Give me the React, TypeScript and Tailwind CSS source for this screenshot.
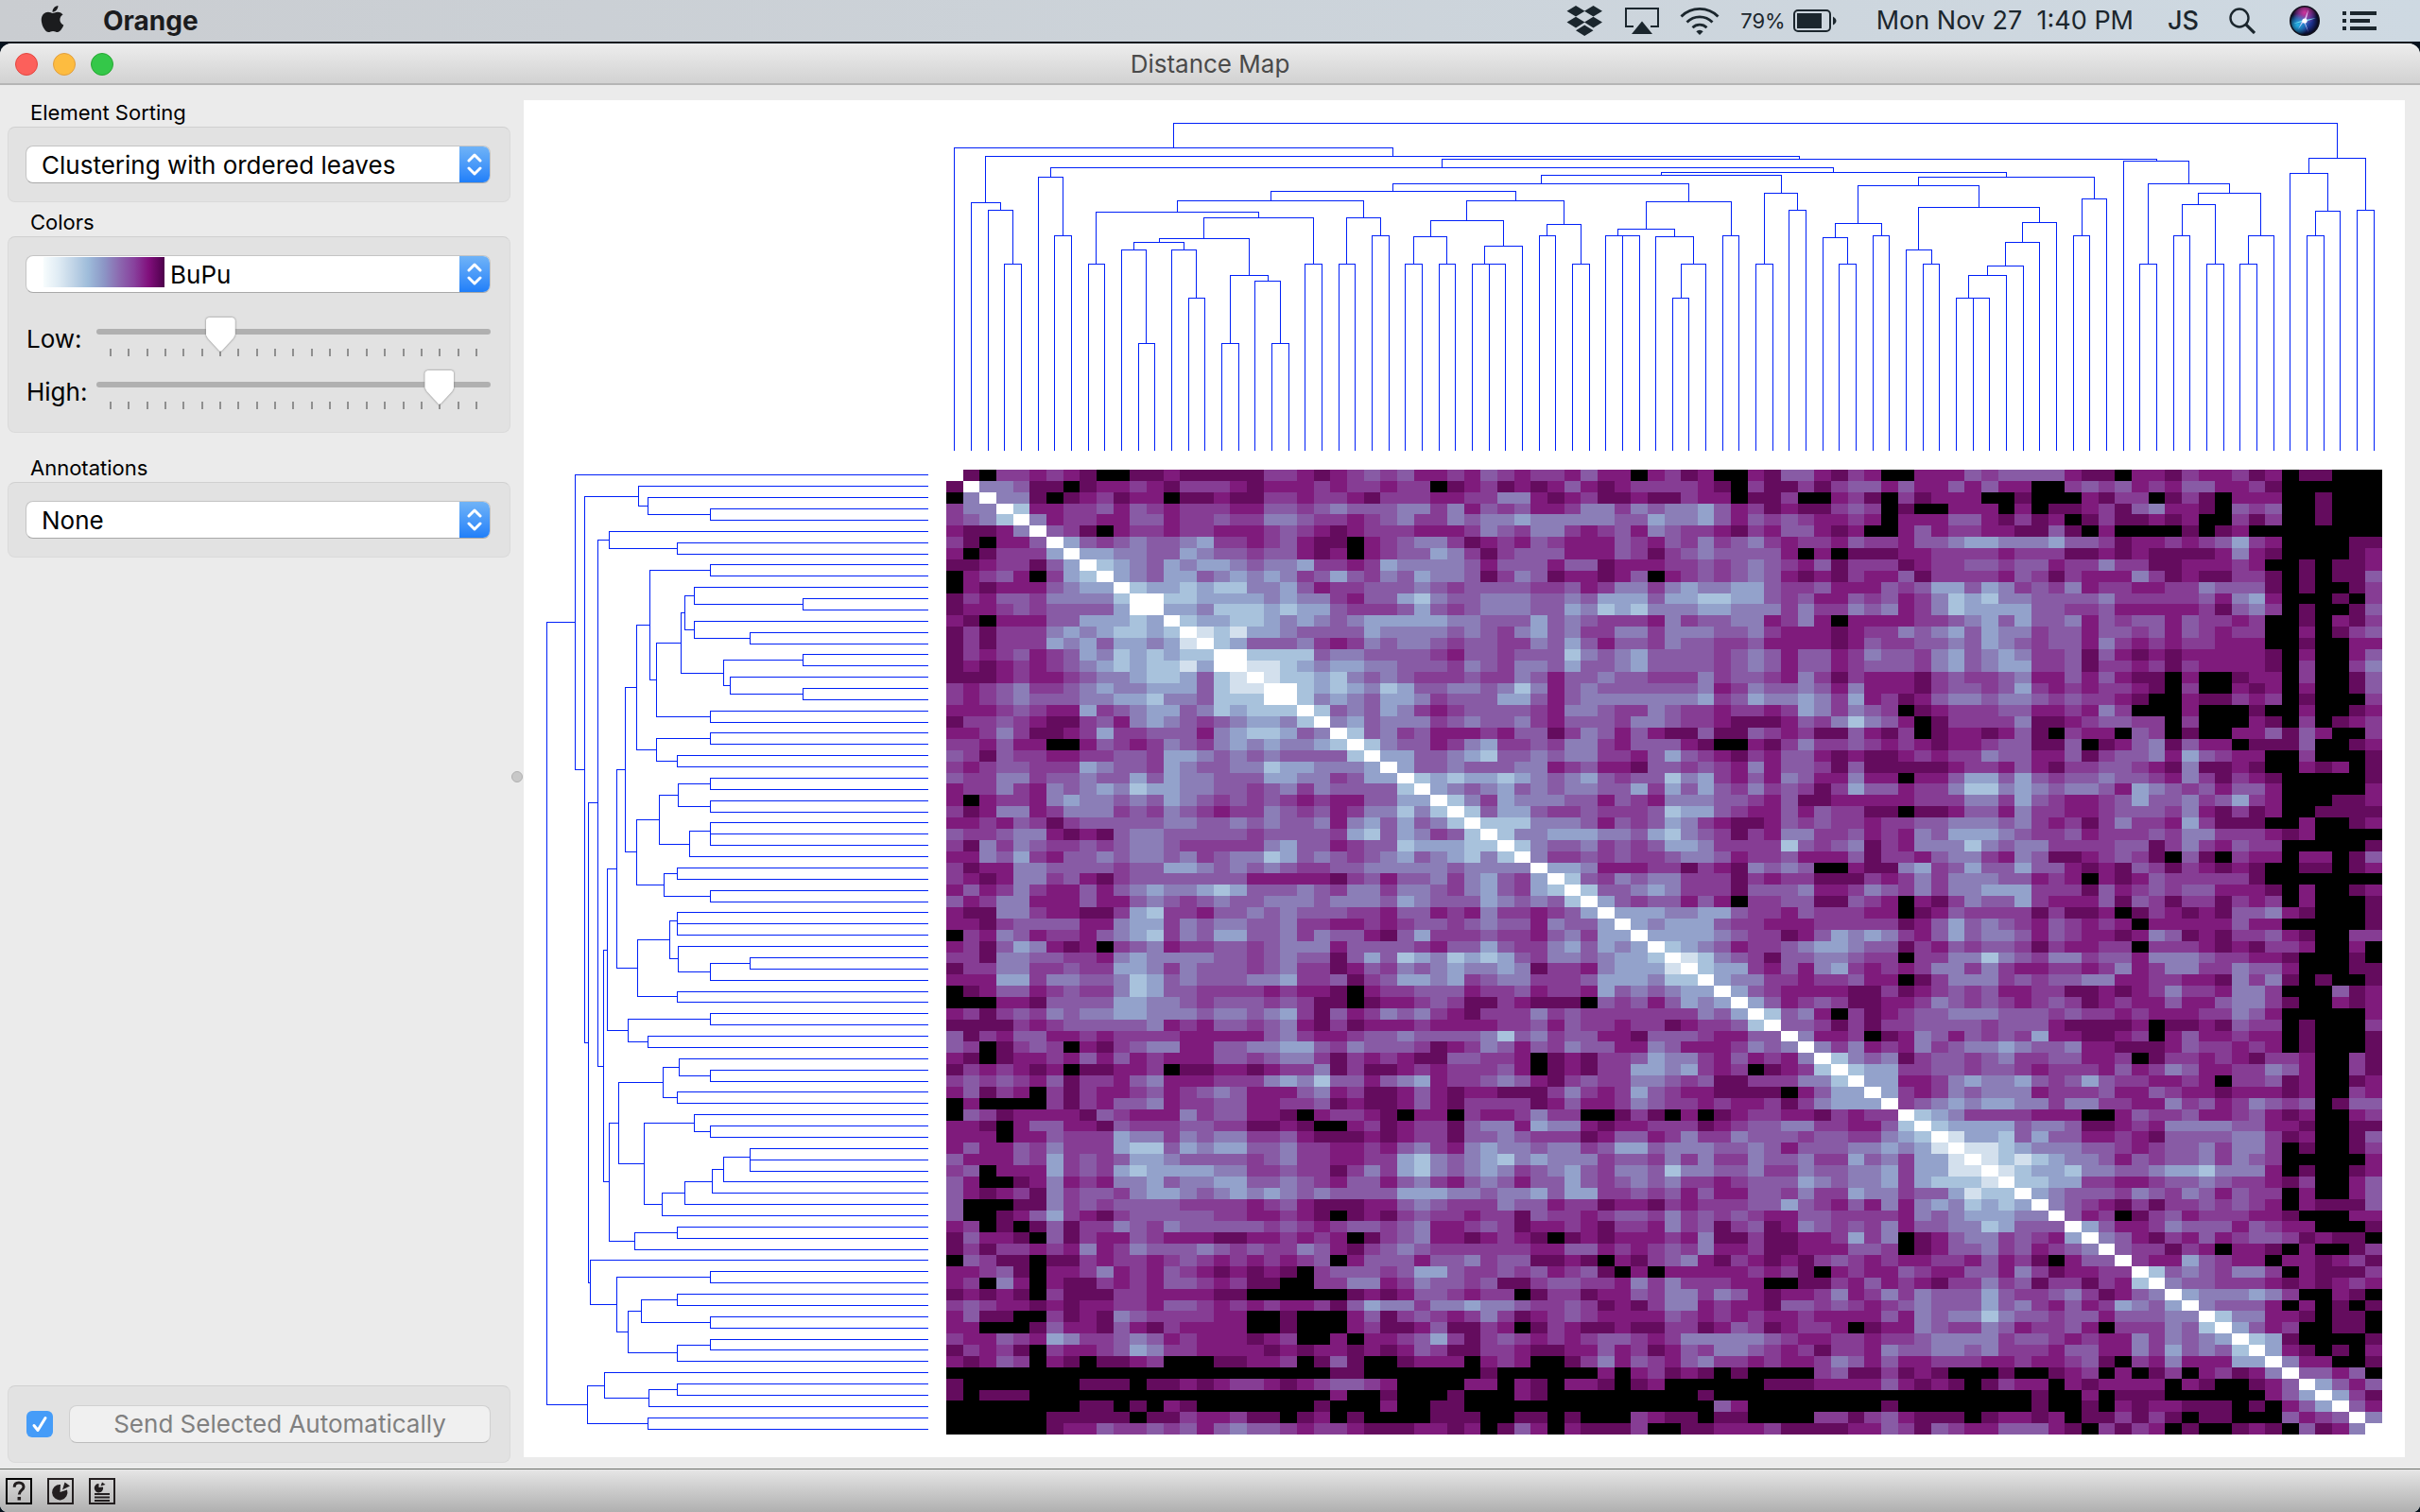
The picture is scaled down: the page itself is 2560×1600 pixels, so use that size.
import type { ReactNode } from 'react';
import { FaApple } from 'react-icons/fa';

/* ---------- Distance matrix ---------- */

// Colour levels from nearest (w) to farthest (k).
const LEVELS: Record<string, string> = {
  w: '#ffffff',
  a: '#d3e0ed',
  b: '#a8c2dc',
  c: '#93a2cb',
  d: '#8b7eb7',
  e: '#885ba5',
  f: '#863d94',
  g: '#7f1b7c',
  h: '#640c5e',
  k: '#000000',
};

// Upper triangle of the symmetric matrix: row i lists columns i and up.
const TRIANGLE = [
  'whkffgfghkkhhghhhhhffghgfefeggfgefgffgeggkg' + 'fhgkkgheeghfgkkgggefeeeeghhkgghfggfhgkhhkkk',
  'wddehhkhggfghfffghgggfgffgffkhgfhghgeghgff' + 'ffghkfhhfhfeegeggegeggkkfefegfgeeggfhkkkkkk',
  'wddhkhgfhggkhhghhffgffghfffggffddghgfhhgh' + 'hfggkhhfkkgfhkfhgggkkhkkkghffkhfhkgggkkhkkk',
  'wbggffegefgfffggeefedeeeddfdgefeggfddfde' + 'ddcegfhghhfefkhkkgggkgkhhgfhedgghkefekkhkkk',
  'wdgffggeegffeffddeffgfedffdeddcdddddeec' + 'ddcegefefggfgkgggeeghfhgkhfhhghgkkfhfkkhkkk',
  'wefhkgffgffgggfefghgfffgggfdefddfgfegd' + 'effghfgeeghgkkgegffgghhehkgkkkkhkhgkkkkkkkk',
  'wcefedeedcffgfeghhkgfeddfhgfgefgggefg' + 'efdfedfgffgeffgeedccdddceefhggfgfecfgkkkkhh',
  'wccddeecdeefeeghgkgfeecdfhfeeegggefh' + 'fedeeeegkgkhhhggffffgfffhhghghhhhgdghkkkkhg',
  'wbcdecdccdeddcffgfcddddegeeegeehggg' + 'ffefedefgehfffhgffeefeegffdffhhgggfgkkhkhhg',
  'wcdeccedcdcdfecefdecddehfdehgghgek' + 'gfefedeghghfggehffffgefhfgggdfhghhffhkhkhhe',
  'wbccbcbbddcegffeeedefeeeeffegfddf' + 'dcddcceffegggefeccecdfefdgffggffdeeehkhkkhf',
  'wwbbccccdcddfgeecbdeedddeedeccce' + 'ccbbccefeggefegfdbcbddeeeedfffffegdcgkkkhkf',
  'wccdbbbcbccefffecefedddeecdbcbd' + 'ddccdddfdffdedgfdbcccceeffegggggfhedfkhkkhe',
  'wbccbbcdcdedcccccddeeecedefffg' + 'dfeeddgfdgkggggffedceceedgefeegeffgfkkhkghf',
  'wabaccdeeeecddddedefdcedffddf' + 'dddeedfggghgffdedcecddfeegeefegefgffkkgkhfe',
  'wbceeedfgfdeddefeeffdecegeef' + 'deeffegggghgeffeedecdefeegdfgfgffgggkkhkkgg',
  'wwbbbbeddeeeefgeefeeebdedce' + 'eeefedegeegfdeefdcedcdffeheghghggggghkgkkge',
  'waabcdccddeeefdefddeceedce' + 'eeefedegeegfeeefdcedccffehffgfhfgggghkfkkfd',
  'wabbcbdedefffeffdegeedeef' + 'ffdfeefgdfhfggghfeffedggegeghhkgkkhggkfkkhe',
  'wwbcbcdbceeddedbdgedeeee' + 'eedgfdeedegdggghfeefecfgfgffghkfkkghgkgkkhe',
  'wbdcdeccdfeeeccegeddddd' + 'ddcfecddcdfcgfhgeddeddefeffghkkghhfgfkhkkkf',
  'wbedecdfgfeeeefgddeffd' + 'effgffgfcdfdefkhgfffeeggfgdfkkkgkkkhkkgkkhg',
  'wdcedddfedeedfgeeefdd' + 'effghhhgefdbdegkhffffdhhgfeeffkfkkkghkfkhgf',
  'wbedfegggfgeehfdegeg' + 'hhehhefgfhheghfkhgghgehkfggkefkhkkggehegkkf',
  'wbdeegfdcffefddfgee' + 'eghkkghfdffefgfghggfeehhekhgedheggkhhhekkhg',
  'wcceedcbeededdffge' + 'cefghfgeeghghhgfgffdeeggehfeedgcefggkkfkkkh',
  'wceedeeeddgfegghe' + 'efefgdgeefhehhhhhgffgeghffeefghdhhghkkghgkh',
  'wbcbccbcdedcefee' + 'bdcfgegdeggdggkggeccecefeedeefgdfhfghkkkkkh',
  'wcdedcededdeecf' + 'cecefdfefhfceegffdbbdcdeddegcdefegeegkkkkkg',
  'wbdfcdddeegefg' + 'dddeefgehhgggggfffddfcefggfeceedfecfgkkkhhg',
  'wbecceffefffe' + 'bccefggegeffhhkhhgeegdffggfeeefdghfhgkkhhhh',
  'wbbbdddegefe' + 'cdfghhgefeffgffeedddedfgfhfdffgcfhhhkkgkkhg',
  'wbddcccddec' + 'bdefhfgddffegfgdecccdeffegfffefddfffghgkkkk',
  'wbdeedfefe' + 'ccdffffbefedhfgdddbdeddffffeehfdfgeffkkkkkh',
  'wdffefeff' + 'eddegffegggehffgeddfgdehhgfefhkehkfggkggkhe',
  'wccdgggf' + 'fhfghdedekkghhdcfeceeceeghghefhfghghkkhhkhg',
  'wbefded' + 'dfffhfgffhhhfgfdfdddeegfgkghgefffffhkkkkkkk',
  'wbeedc' + 'dfffheeedggfdefdfddcccfffhegfefeeggghkgkkhg',
  'wcefe' + 'egegkffeehhefgkghfdeecfgggehefhffhfgfkgkkkh',
  'wccc' + 'ddcceffgefffggkhgeffffhfhhgkhfghgheedghkkkh',
  'wcd' + 'ccceffgggfffffhgecedefgefgfgkgggggeggkkkkkh',
  'wc' + 'cccdeffhgecdcdfgeceddegefgghgdehghffeghkkff',
  'w' + 'bcdegffedccdeehfgefeefhfggffkfffghghffgkkgk',
  'wabdefheeddeffkffddbdefddfeegdddeffgghkkkhk',
  'wbccfgegdcfgfgfddfdfggffgfdgfddffdeegkkkhh',
  'wcddffgffeggkhfdddfefeeddggffgghdfdhkhkkh',
  'wcefgggghhfhgfefeggffhhghgfdffgddfkkkehg',
  'wcegfefhhggfdefefgfefhgfggeggeddfhkkghg',
  'wbedgkfhgfeedddeeefeffgfgggffdegkkkkkg',
  'weefhfhffeeeefeeeghhhhgkhhgheffkhkkkf',
  'wdggfkhgdegefefcgghhgfkgeggfggkhkkkh',
  'wdfdgfgdfeddcdeedgghhhgeffgfgkhkkkh',
  'wbdedhfeefedffeeggfkhffgfghffgkkfh',
  'wbccffeefeefgfffgegfdeggffdegkkfh',
  'wccggfdcddcefeceffggfgkffehgkkhg',
  'wcfgfdedddgfffeggefgghggghgkkfg',
  'wfedcdccddfddffggdfegfdefekhee',
  'wbcdffffgggkkgeffeggfeghgkkgf',
  'wbcccceddehhgfgddddeegghkkhh',
  'waccbeceeggfgheeeeddfhgkkhe',
  'waabcdddeefgfeedfddfkhkkhf',
  'wababcddegefeedfdefkkkkkg',
  'wabccbddeedccbdddgkhkkhg',
  'wbbccffggfeedeffghfkkge',
  'wcdeeefdefdegeffkgkkge',
  'wdefghfhffefefgkghhhe',
  'wegfkhfegfffgghkkkgg',
  'wceggfdeeegefggkkkh',
  'wdeghfgegfeefhghhk',
  'weffhfgkgghkgkkhf',
  'wfggcefggkgghgfh',
  'wbedefddfkghhhf',
  'wdeefffghghgfg',
  'wcdddcdfkkghk',
  'wdeeegkgkhkh',
  'wbddgghkhhk',
  'wcegfkkhhk',
  'wbchkkkkh',
  'wcghkhkg',
  'wdggkkh',
  'weegek',
  'wcege',
  'wcfh',
  'weg',
  'wd',
  'w',
];

const SIZE = TRIANGLE.length;

function levelAt(row: number, col: number) {
  const i = Math.min(row, col);
  return TRIANGLE[i][Math.max(row, col) - i];
}

type Run = { row: number; col: number; span: number; level: string };

const RUNS: Run[] = [];
for (let row = 0; row < SIZE; row++) {
  let col = 0;
  while (col < SIZE) {
    const level = levelAt(row, col);
    let end = col + 1;
    while (end < SIZE && levelAt(row, end) === level) end++;
    RUNS.push({ row, col, span: end - col, level });
    col = end;
  }
}

function Heatmap() {
  return (
    <svg
      role="img"
      aria-label="Distance matrix"
      className="block h-full w-full"
      viewBox={`0 0 ${SIZE} ${SIZE}`}
      preserveAspectRatio="none"
      shapeRendering="crispEdges"
    >
      {RUNS.map((r) => (
        <rect key={`${r.row}-${r.col}`} x={r.col} y={r.row} width={r.span} height={1} fill={LEVELS[r.level]} />
      ))}
    </svg>
  );
}

/* ---------- Dendrogram ---------- */

type Tree = null | { depth: number; left: Tree; right: Tree };

const o: Tree = null;
const n = (depth: number, left: Tree, right: Tree): Tree => ({ depth, left, right });
const LEAF_DEPTH = 347;

const earlyClusters = n(
  72,
  n(
    82,
    n(
      94,
      n(149, o, o),
      n(
        100,
        n(
          122,
          n(126, n(134, o, n(233, o, o)), n(134, o, n(185, o, o))),
          n(161, n(233, o, o), n(167, o, n(233, o, o))),
        ),
        n(149, o, o),
      ),
    ),
    n(100, n(149, o, o), n(119, o, o)),
  ),
  n(
    82,
    n(103, n(120, n(149, o, o), n(149, o, o)), n(130, n(149, o, n(149, o, o)), o)),
    n(107, n(119, o, o), n(149, o, o)),
  ),
);

const middleClusters = n(
  83,
  n(112, n(119, o, n(119, o, o)), n(120, o, n(149, n(185, o, o), o))),
  n(119, o, o),
);

const lateClusters = n(
  57,
  n(
    66,
    n(106, n(121, o, n(149, o, o)), n(119, o, o)),
    n(
      89,
      n(134, o, n(149, o, o)),
      n(105, n(126, n(151, n(161, n(185, o, n(185, o, o)), o), o), o), o),
    ),
  ),
  n(80, n(119, o, o), o),
);

const TREE = n(
  0,
  n(
    26,
    o,
    n(
      35,
      n(84, o, n(92, o, n(149, o, o))),
      n(
        38,
        n(
          47,
          n(57, o, n(119, o, o)),
          n(52, n(55, n(64, earlyClusters, middleClusters), n(74, n(149, o, o), n(92, o, o))), lateClusters),
        ),
        n(
          40,
          o,
          n(64, n(149, o, o), n(74, n(86, n(119, o, o), n(149, o, o)), n(119, n(149, o, o), o))),
        ),
      ),
    ),
  ),
  n(37, n(53, o, n(93, n(119, o, o), o)), n(92, o, o)),
);

// Each bracket joins two children: [first position, its depth, second position, its depth, own depth].
type Bracket = [number, number, number, number, number];

function layoutTree(root: Tree): Bracket[] {
  const brackets: Bracket[] = [];
  let leaf = 0;
  const place = (t: Tree): [number, number] => {
    if (t === null) return [leaf++ + 0.5, LEAF_DEPTH];
    const [a, da] = place(t.left);
    const [b, db] = place(t.right);
    brackets.push([a, da, b, db, t.depth]);
    return [(a + b) / 2, t.depth];
  };
  place(root);
  return brackets;
}

const BRACKETS = layoutTree(TREE);
const TOP_PATH = BRACKETS.map(([a, da, b, db, d]) => `M${a} ${da}V${d}H${b}V${db}`).join('');
const SIDE_PATH = BRACKETS.map(([a, da, b, db, d]) => `M${da} ${a}H${d}V${b}H${db}`).join('');

function Dendrogram({ side }: { side: 'top' | 'left' }) {
  return (
    <svg
      role="img"
      aria-label={side === 'top' ? 'Column clusters' : 'Row clusters'}
      className="block h-full w-full overflow-visible"
      viewBox={side === 'top' ? `0 0 ${SIZE} ${LEAF_DEPTH}` : `0 0 ${LEAF_DEPTH} ${SIZE}`}
      preserveAspectRatio="none"
      shapeRendering="crispEdges"
    >
      <path
        d={side === 'top' ? TOP_PATH : SIDE_PATH}
        fill="none"
        stroke="#0020f8"
        strokeWidth={1}
        vectorEffect="non-scaling-stroke"
      />
    </svg>
  );
}

/* ---------- Menu bar ---------- */

function DropboxIcon() {
  return (
    <svg className="h-8 w-[38px]" viewBox="0 0 38 32" fill="currentColor" aria-hidden="true">
      <path d="M10 0 19.500 5.800 10 11.600 0.500 5.800ZM28.500 0 38 5.800 28.500 11.600 19 5.800ZM10 11.800 19.500 17.600 10 23.400 0.500 17.600ZM28.500 11.800 38 17.600 28.500 23.400 19 17.600ZM19.200 20.600 28.500 26.300 19.200 32 10 26.300Z" />
    </svg>
  );
}

function AirPlayIcon() {
  return (
    <svg className="h-7 w-9" viewBox="0 0 36 28" aria-hidden="true">
      <path d="M9 20H1V1H35V20H27" fill="none" stroke="currentColor" strokeWidth="2" />
      <path d="M18 14.500 29 28H7Z" fill="currentColor" />
    </svg>
  );
}

function WifiIcon() {
  return (
    <svg className="h-[30px] w-[42px]" viewBox="0 0 42 30" fill="none" stroke="currentColor" strokeWidth="2.800" aria-hidden="true">
      <path d="M1.500 10.500A27.500 27.500 0 0 1 40.500 10.500" />
      <path d="M7.500 16.500A19 19 0 0 1 34.500 16.500" />
      <path d="M13.500 22.200A10.800 10.800 0 0 1 28.500 22.200" />
      <path d="M21 30 17.300 26.200A5.300 5.300 0 0 1 24.700 26.200Z" fill="currentColor" stroke="none" />
    </svg>
  );
}

function BatteryIcon() {
  return (
    <svg className="h-6 w-[46px]" viewBox="0 0 46 24" aria-hidden="true">
      <rect x="1" y="1" width="38" height="22" rx="4" fill="none" stroke="currentColor" strokeWidth="2" />
      <rect x="4" y="4" width="26" height="16" fill="currentColor" />
      <path d="M42 7.500C44.500 9 45.500 10.500 45.500 12C45.500 13.500 44.500 15 42 16.500Z" fill="currentColor" />
    </svg>
  );
}

function SearchIcon() {
  return (
    <svg className="h-7 w-7" viewBox="0 0 28 28" fill="none" stroke="currentColor" strokeWidth="2.400" aria-hidden="true">
      <circle cx="11" cy="11" r="9.500" />
      <path d="M17.800 17.800 27 27" strokeWidth="3.200" />
    </svg>
  );
}

function SiriIcon() {
  return (
    <svg className="h-8 w-8" viewBox="0 0 32 32" aria-hidden="true">
      <defs>
        <radialGradient id="siri-base" cx="50%" cy="50%" r="50%">
          <stop offset="0%" stopColor="#2f6fd8" />
          <stop offset="60%" stopColor="#1a2a80" />
          <stop offset="100%" stopColor="#080a20" />
        </radialGradient>
        <radialGradient id="siri-pink" cx="50%" cy="20%" r="45%">
          <stop offset="0%" stopColor="#d0349a" />
          <stop offset="100%" stopColor="#d0349a" stopOpacity="0" />
        </radialGradient>
        <radialGradient id="siri-cyan" cx="25%" cy="65%" r="40%">
          <stop offset="0%" stopColor="#22b4e6" />
          <stop offset="100%" stopColor="#22b4e6" stopOpacity="0" />
        </radialGradient>
      </defs>
      <circle cx="16" cy="16" r="16" fill="#10101c" />
      <circle cx="16" cy="16" r="14.500" fill="url(#siri-base)" />
      <circle cx="16" cy="16" r="14.500" fill="url(#siri-pink)" />
      <circle cx="16" cy="16" r="14.500" fill="url(#siri-cyan)" />
      <path d="M16 15 28 13 17 17ZM15 17 4 19 15 15Z" fill="#7fe9f5" opacity="0.850" />
      <path d="M15 16 20 4 17.500 16ZM16 16 20 28 15 17ZM15 17 9 25 14 15Z" fill="#e9d6ff" opacity="0.850" />
      <circle cx="16" cy="16" r="2.600" fill="#fff" />
    </svg>
  );
}

function ListIcon() {
  return (
    <svg className="h-5 w-9" viewBox="0 0 36 20" fill="currentColor" aria-hidden="true">
      <path d="M0 0H4V4H0ZM0 8H4V12H0ZM0 16H4V20H0ZM8 0H36V4H8ZM8 8H29V12H8ZM8 16H36V20H8Z" />
    </svg>
  );
}

function MenuBar() {
  return (
    <header className="flex h-11 shrink-0 items-center bg-linear-to-r from-[#cacdd1] to-[#ced9e2] pr-[46px] pl-[42px] text-[#1b262d]">
      <button type="button" aria-label="Apple menu" className="-mt-1 mr-10 text-[#1b1c1e]">
        <FaApple className="h-8 w-[27px]" />
      </button>
      <button type="button" className="text-[28px] leading-8 font-bold text-[#1b1c1e]">
        Orange
      </button>
      <div className="ml-auto flex items-center">
        <button type="button" aria-label="Dropbox" className="mr-6">
          <DropboxIcon />
        </button>
        <button type="button" aria-label="AirPlay" className="mr-[22px]">
          <AirPlayIcon />
        </button>
        <button type="button" aria-label="Wi-Fi" className="mr-[22px]">
          <WifiIcon />
        </button>
        <button type="button" aria-label="Battery 79%" className="mr-[42px] flex items-center gap-2">
          <span className="text-[22px] leading-8">79%</span>
          <BatteryIcon />
        </button>
        <button type="button" className="mr-9 text-[27px] leading-8 whitespace-pre">
          {'Mon Nov 27  1:40 PM'}
        </button>
        <button type="button" className="mr-8 text-[27px] leading-8 font-medium">
          JS
        </button>
        <button type="button" aria-label="Search" className="mr-9">
          <SearchIcon />
        </button>
        <button type="button" aria-label="Siri" className="mr-6">
          <SiriIcon />
        </button>
        <button type="button" aria-label="Notification Center">
          <ListIcon />
        </button>
      </div>
    </header>
  );
}

/* ---------- Window chrome ---------- */

function TitleBar() {
  return (
    <div className="flex h-11 shrink-0 items-center border-b-2 border-[#b5b5b5] bg-linear-to-b from-[#ededed] to-[#d2d2d2] px-4 pt-0.5">
      <div className="flex flex-1 gap-4">
        <button type="button" aria-label="Close" className="size-6 rounded-full border border-[#e2463f] bg-[#fc605b]" />
        <button type="button" aria-label="Minimize" className="size-6 rounded-full border border-[#e09e3e] bg-[#fdbc40]" />
        <button type="button" aria-label="Zoom" className="size-6 rounded-full border border-[#27a833] bg-[#34c749]" />
      </div>
      <h1 className="text-[26px] leading-8 text-[#4a4a4a]">Distance Map</h1>
      <div className="flex-1" />
    </div>
  );
}

function StatusBar() {
  return (
    <footer className="flex h-[46px] shrink-0 items-center gap-4 border-t border-[#6e726c] bg-linear-to-b from-[#e6e6e6] to-[#b0b0b0] px-1.5">
      <button
        type="button"
        aria-label="Help"
        className="grid size-7 place-items-center border-2 border-black text-[#231f20]"
      >
        <svg className="size-6" viewBox="0 0 24 24" fill="none" stroke="currentColor" strokeWidth="3" aria-hidden="true">
          <path d="M7.200 7.800C7.200 4.500 9.200 3 12 3C15 3 17 4.800 17 7.500C17 11 12.300 11 12.300 15.500" />
          <path d="M12.300 18V21.500" strokeWidth="3.500" />
        </svg>
      </button>
      <button
        type="button"
        aria-label="Save image"
        className="grid size-7 place-items-center border-2 border-[#231f20] text-[#231f20]"
      >
        <svg className="size-6" viewBox="0 0 24 24" fill="currentColor" aria-hidden="true">
          <path d="M11.500 13 12 5A8.200 8.200 0 1 0 19 10.500Z" />
          <path d="M14 10.500 16.500 2.500 22 6.500Z" />
        </svg>
      </button>
      <button
        type="button"
        aria-label="Report"
        className="grid size-7 place-items-center border-2 border-[#231f20] text-[#231f20]"
      >
        <svg className="size-6" viewBox="0 0 24 24" fill="currentColor" aria-hidden="true">
          <path d="M8.500 8 8.500 4A4.700 4.700 0 1 0 13 7.500Z" />
          <path d="M10.500 6.500 12 2.500 15.500 5Z" />
          <path d="M4 14H20V16H4ZM4 17.500H20V19.500H4ZM4 21H20V23H4Z" />
        </svg>
      </button>
    </footer>
  );
}

/* ---------- Sidebar ---------- */

function GroupBox({ title, children, className = '' }: { title: string; children: ReactNode; className?: string }) {
  return (
    <section className={className}>
      <h2 className="pb-0.5 pl-6 text-[22px] leading-[26px] text-black">{title}</h2>
      <div className="rounded-lg border border-[#dadada] border-t-[#d0d0d0] bg-[#e2e2e2] py-[19px] pr-5 pl-[18px]">
        {children}
      </div>
    </section>
  );
}

function PopUp({ label, value, swatch = false }: { label: string; value: string; swatch?: boolean }) {
  return (
    <div className="relative flex h-10 overflow-hidden rounded-lg border border-[#c4c4c4] border-b-[#a8a8a8] bg-white">
      <select
        aria-label={label}
        defaultValue={value}
        className={
          swatch
            ? 'h-full w-full appearance-none bg-transparent pl-[152px] text-[26px] text-black outline-none'
            : 'h-full w-full appearance-none bg-transparent pl-4 text-[26px] text-black outline-none'
        }
      >
        <option>{value}</option>
      </select>
      {swatch && (
        <span className="pointer-events-none absolute top-px left-[18px] h-8 w-32 bg-[linear-gradient(to_right,#f7fcfd,#e0ecf4_12%,#bfd3e6_25%,#9ebcda_37%,#8c96c6_50%,#8c6bb1_62%,#88419d_75%,#810f7c_87%,#4d004b)]" />
      )}
      <span className="pointer-events-none absolute inset-y-0 right-0 grid w-8 place-items-center bg-linear-to-b from-[#6fb3f7] to-[#1f7ff9]">
        <svg className="h-[26px] w-4" viewBox="0 0 16 26" fill="none" stroke="#fff" strokeWidth="3" strokeLinecap="round" strokeLinejoin="round" aria-hidden="true">
          <path d="M2 9 8 3 14 9M2 17 8 23 14 17" />
        </svg>
      </span>
    </div>
  );
}

const TICKS = Array.from({ length: 21 }, (_, i) => i);

function LevelSlider({ id, label, value }: { id: string; label: string; value: number }) {
  return (
    <div className="flex h-14 items-start">
      <label htmlFor={id} className="w-[75px] pt-[7px] pl-px text-[26px] leading-8 text-black">
        {label}
      </label>
      <div className="relative h-[42px] flex-1">
        <div className="absolute inset-x-0 top-3 h-1.5 rounded-full bg-[#b0b0b0]" />
        <div className="absolute inset-x-[14px] top-[33px] flex justify-between">
          {TICKS.map((t) => (
            <span key={t} className="h-2 w-0.5 bg-[#8f8f8f]" />
          ))}
        </div>
        <input
          id={id}
          type="range"
          min={0}
          max={20}
          defaultValue={value}
          className="relative block h-9 w-full appearance-none bg-transparent drop-shadow-[0_0_1px_#777] outline-none [&::-webkit-slider-thumb]:h-9 [&::-webkit-slider-thumb]:w-[31px] [&::-webkit-slider-thumb]:appearance-none [&::-webkit-slider-thumb]:bg-white [&::-webkit-slider-thumb]:[clip-path:polygon(0_3px,1px_1px,3px_0,28px_0,30px_1px,31px_3px,31px_18px,29px_22px,17px_35px,15px_36px,14px_35px,2px_22px,0_18px)]"
        />
      </div>
    </div>
  );
}

function Sidebar() {
  return (
    <aside className="flex w-[540px] shrink-0 flex-col pt-4 pb-1.5 pl-2">
      <GroupBox title="Element Sorting">
        <PopUp label="Element Sorting" value="Clustering with ordered leaves" />
      </GroupBox>
      <GroupBox title="Colors" className="mt-2">
        <PopUp label="Color palette" value="BuPu" swatch />
        <div className="mt-[26px] -mb-2.5">
          <LevelSlider id="low" label="Low:" value={6} />
          <LevelSlider id="high" label="High:" value={18} />
        </div>
      </GroupBox>
      <GroupBox title="Annotations" className="mt-6">
        <PopUp label="Annotations" value="None" />
      </GroupBox>
      <div className="mt-auto flex items-center rounded-lg border border-[#dadada] border-t-[#d0d0d0] bg-[#e2e2e2] py-5 pr-5 pl-[19px]">
        <span className="relative mr-[17px] grid size-7 place-items-center">
          <input
            id="auto-send"
            type="checkbox"
            defaultChecked
            aria-label="Send automatically"
            className="size-7 appearance-none rounded-md bg-[#459cf8]"
          />
          <svg className="pointer-events-none absolute size-5" viewBox="0 0 20 20" fill="none" stroke="#fff" strokeWidth="3" strokeLinecap="round" strokeLinejoin="round" aria-hidden="true">
            <path d="M4 11.500 8 16.500 16 3.500" />
          </svg>
        </span>
        <button
          type="button"
          className="h-10 flex-1 rounded-lg border border-[#d0d0d0] border-b-[#bcbcbc] bg-[#f0f0f0] text-[26px] leading-8 text-[#808080]"
        >
          Send Selected Automatically
        </button>
      </div>
    </aside>
  );
}

/* ---------- Page ---------- */

export default function App() {
  return (
    <div className="flex h-screen min-h-[900px] flex-col bg-[#06121d] font-['Inter','Liberation_Sans',sans-serif]">
      <MenuBar />
      <div className="mt-0.5 flex min-h-0 flex-1 flex-col overflow-hidden rounded-t-xl rounded-b-lg bg-[#ebebeb]">
        <TitleBar />
        <main className="flex min-h-0 flex-1">
          <Sidebar />
          <div className="flex w-3.5 shrink-0 items-center justify-center">
            <span className="size-3 rounded-full border border-[#b0b0b0] bg-[#c8c8c8]" />
          </div>
          <div className="mt-4 mr-4 mb-3 grid min-w-0 flex-1 grid-cols-[minmax(0,404fr)_minmax(0,1519fr)] grid-rows-[minmax(0,347fr)_minmax(0,1021fr)] gap-x-[19px] gap-y-5 bg-white p-6">
            <div />
            <Dendrogram side="top" />
            <Dendrogram side="left" />
            <Heatmap />
          </div>
        </main>
        <StatusBar />
      </div>
    </div>
  );
}
